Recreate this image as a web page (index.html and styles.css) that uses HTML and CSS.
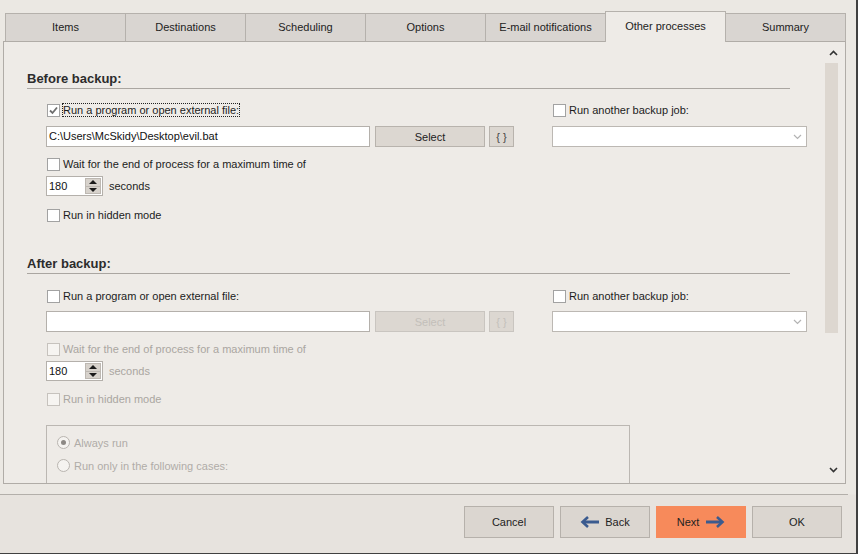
FILE: index.html
```html
<!DOCTYPE html>
<html>
<head>
<meta charset="utf-8">
<link rel="stylesheet" href="styles.css">
</head>
<body>
<div class="window">
  <div class="main">
    <div class="tabs">
      <div class="tab">Items</div>
      <div class="tab">Destinations</div>
      <div class="tab">Scheduling</div>
      <div class="tab">Options</div>
      <div class="tab">E-mail notifications</div>
      <div class="tab active">Other processes</div>
      <div class="tab">Summary</div>
    </div>
    <div class="panel">
      <div class="content">
        <div class="section before">
          <div class="heading">Before backup:</div>
          <div class="body">
            <div class="row r-first">
              <div class="left">
                <span class="chk"><svg width="11" height="11" viewBox="0 0 11 11"><polyline points="2,5.5 4.5,8 9,2.5" fill="none" stroke="#6e6e6e" stroke-width="1.8"/></svg></span>
                <span class="lbl focus">Run a program or open external file:</span>
              </div>
              <div class="right">
                <span class="chk"></span>
                <span class="lbl">Run another backup job:</span>
              </div>
            </div>
            <div class="row r-input">
              <div class="textbox">C:\Users\McSkidy\Desktop\evil.bat</div>
              <div class="btn select">Select</div>
              <div class="btn braces">{ }</div>
              <div class="combo"><svg width="9" height="6" viewBox="0 0 9 6"><polyline points="1,1 4.5,4.5 8,1" fill="none" stroke="#b3b3b3" stroke-width="1.2"/></svg></div>
            </div>
            <div class="row r-wait">
              <span class="chk"></span>
              <span class="lbl">Wait for the end of process for a maximum time of</span>
            </div>
            <div class="row r-spin">
              <div class="spinner">
                <span class="num">180</span>
                <span class="spin"><span class="up"></span><span class="down"></span></span>
              </div>
              <span class="unit">seconds</span>
            </div>
            <div class="row r-hidden">
              <span class="chk"></span>
              <span class="lbl">Run in hidden mode</span>
            </div>
          </div>
        </div>

        <div class="section after">
          <div class="heading">After backup:</div>
          <div class="body">
            <div class="row r-first">
              <div class="left">
                <span class="chk"></span>
                <span class="lbl">Run a program or open external file:</span>
              </div>
              <div class="right">
                <span class="chk"></span>
                <span class="lbl">Run another backup job:</span>
              </div>
            </div>
            <div class="row r-input">
              <div class="textbox"></div>
              <div class="btn select disabled">Select</div>
              <div class="btn braces disabled">{ }</div>
              <div class="combo"><svg width="9" height="6" viewBox="0 0 9 6"><polyline points="1,1 4.5,4.5 8,1" fill="none" stroke="#b3b3b3" stroke-width="1.2"/></svg></div>
            </div>
            <div class="row r-wait dis">
              <span class="chk"></span>
              <span class="lbl">Wait for the end of process for a maximum time of</span>
            </div>
            <div class="row r-spin dis">
              <div class="spinner">
                <span class="num">180</span>
                <span class="spin"><span class="up"></span><span class="down"></span></span>
              </div>
              <span class="unit">seconds</span>
            </div>
            <div class="row r-hidden dis">
              <span class="chk"></span>
              <span class="lbl">Run in hidden mode</span>
            </div>
            <div class="group">
              <div class="radio-row"><span class="radio on"></span><span class="lbl">Always run</span></div>
              <div class="radio-row second"><span class="radio"></span><span class="lbl">Run only in the following cases:</span></div>
            </div>
          </div>
        </div>
      </div>
      <div class="scrollbar">
        <div class="sb-up"><svg width="9" height="6" viewBox="0 0 9 6"><polyline points="1,5 4.5,1.5 8,5" fill="none" stroke="#333" stroke-width="1.6"/></svg></div>
        <div class="sb-thumb"></div>
        <div class="sb-space"></div>
        <div class="sb-down"><svg width="9" height="6" viewBox="0 0 9 6"><polyline points="1,1 4.5,4.5 8,1" fill="none" stroke="#333" stroke-width="1.6"/></svg></div>
      </div>
    </div>
  </div>
  <div class="sep"></div>
  <div class="footer">
    <div class="fbtn">Cancel</div>
    <div class="fbtn"><svg width="20" height="12" viewBox="0 0 20 12"><path d="M19 6 H4" stroke="#3b5b8f" stroke-width="3" fill="none"/><polyline points="8,1 2.5,6 8,11" fill="none" stroke="#3b5b8f" stroke-width="2.6"/></svg><span>Back</span></div>
    <div class="fbtn next"><span>Next</span><svg width="20" height="12" viewBox="0 0 20 12"><path d="M1 6 H16" stroke="#3b5b8f" stroke-width="3" fill="none"/><polyline points="12,1 17.5,6 12,11" fill="none" stroke="#3b5b8f" stroke-width="2.6"/></svg></div>
    <div class="fbtn">OK</div>
  </div>
</div>
</body>
</html>
```

FILE: styles.css
```css
* { box-sizing: border-box; }
html, body { margin: 0; padding: 0; }
body {
  width: 858px;
  height: 554px;
  overflow: hidden;
  font-family: "Liberation Sans", Arial, sans-serif;
  font-size: 11px;
  color: #1c1c1c;
  background: #e9e5e0;
}
.window {
  width: 858px;
  height: 554px;
  display: flex;
  flex-direction: column;
  border-right: 2px solid #404040;
  border-bottom: 1px solid #404040;
  background: #e9e5e0;
}
.main {
  height: 494px;
  padding: 11px 0 0 3px;
  background: #ebe8e3;
}
.tabs {
  display: flex;
  align-items: flex-end;
  height: 30px;
  padding-left: 2px;
}
.tab {
  width: 121px;
  height: 28px;
  margin-left: -1px;
  border: 1px solid #b5b1ac;
  border-bottom: none;
  background: #d9d5d1;
  display: flex;
  align-items: center;
  justify-content: center;
  color: #222;
  padding-bottom: 2px;
}
.tab:first-child { margin-left: 0; }
.tab.active {
  height: 31px;
  margin-bottom: -1px;
  background: #eeebe7;
  position: relative;
  z-index: 2;
  padding-bottom: 2px;
}
.panel {
  width: 843px;
  height: 443px;
  border: 1px solid #b0aca7;
  background: #eeebe7;
  display: flex;
  overflow: hidden;
}
.content {
  width: 817px;
  height: 100%;
  overflow: hidden;
  padding: 28px 31px 0 23px;
}
.heading {
  font-weight: bold;
  font-size: 13px;
  line-height: 16px;
  padding-top: 1px;
  padding-bottom: 1px;
  border-bottom: 1px solid #aaa6a1;
  color: #2c2c2c;
}
.after { margin-top: 33px; }
.body { padding-left: 19px; width: 800px; }
.row { display: flex; align-items: center; }
.r-first { height: 14px; margin-top: 14px; }
.r-input { height: 21px; margin-top: 9px; }
.r-wait { height: 14px; margin-top: 10px; }
.r-spin { height: 20px; margin-top: 5px; }
.r-hidden { height: 14px; margin-top: 12px; }
.after .r-first { margin-top: 15px; }
.after .r-input { margin-top: 8px; }
.after .r-hidden { margin-top: 11px; }

.left { width: 506px; display: flex; align-items: center; }
.right { display: flex; align-items: center; }
.chk {
  width: 13px;
  height: 13px;
  margin-left: 1px;
  border: 1px solid #a2a2a2;
  background: #fff;
  display: inline-flex;
  align-items: center;
  justify-content: center;
  flex: none;
}
.lbl { margin-left: 3px; line-height: 14px; white-space: nowrap; }
.lbl.focus {
  margin-left: 2px;
  padding: 0 1px;
  outline: 1px dotted #222;
  outline-offset: -1px;
}
.dis .chk { border-color: #c6c2bd; background: #f6f4f1; }
.dis .lbl, .dis .unit { color: #aaa6a1; }

.textbox {
  width: 324px;
  height: 21px;
  border: 1px solid #b4b0ab;
  background: #fff;
  padding-left: 2px;
  line-height: 19px;
  color: #111;
}
.btn {
  height: 21px;
  border: 1px solid #b8b3ad;
  background: #dcd7d1;
  display: flex;
  align-items: center;
  justify-content: center;
  color: #222;
}
.select { width: 110px; margin-left: 5px; }
.braces { width: 25px; margin-left: 4px; color: #444; }
.btn.disabled { color: #c3bfba; border-color: #c9c5c0; }
.combo {
  width: 255px;
  height: 21px;
  margin-left: 38px;
  border: 1px solid #bcb8b3;
  background: #fff;
  display: flex;
  align-items: center;
  justify-content: flex-end;
  padding-right: 4px;
}

.spinner {
  width: 57px;
  height: 20px;
  border: 1px solid #b4b0ab;
  background: #fff;
  display: flex;
  align-items: stretch;
  padding: 1px;
}
.num { flex: 1; padding-left: 1px; line-height: 16px; color: #111; }
.spin {
  width: 16px;
  background: #d7d2cc;
  border: 1px solid #bdb8b2;
  display: flex;
  flex-direction: column;
}
.spin .up, .spin .down {
  flex: 1;
  display: flex;
  align-items: center;
  justify-content: center;
}
.spin .up { border-bottom: 1px solid #bdb8b2; }
.spin .up::before {
  content: "";
  border-left: 4px solid transparent;
  border-right: 4px solid transparent;
  border-bottom: 4px solid #1a1a1a;
}
.spin .down::before {
  content: "";
  border-left: 4px solid transparent;
  border-right: 4px solid transparent;
  border-top: 4px solid #1a1a1a;
}
.unit { margin-left: 6px; }

.group {
  margin-top: 19px;
  width: 584px;
  height: 90px;
  border: 1px solid #bbb7b2;
  padding: 10px 0 0 10px;
}
.radio-row { display: flex; align-items: center; height: 13px; }
.radio-row.second { margin-top: 10px; }
.radio {
  width: 13px;
  height: 13px;
  border-radius: 50%;
  border: 1px solid #b9b5b0;
  background: #f5f3f0;
  display: flex;
  align-items: center;
  justify-content: center;
}
.radio.on::after {
  content: "";
  width: 5px;
  height: 5px;
  border-radius: 50%;
  background: #8d8985;
}
.radio-row .lbl { color: #b0aca7; margin-left: 4px; }

.scrollbar {
  width: 24px;
  height: 100%;
  display: flex;
  flex-direction: column;
}
.sb-up { height: 21px; display: flex; align-items: center; justify-content: center; padding-left: 1px; }
.sb-thumb { height: 270px; width: 13px; margin-left: 4px; background: #ddd7d0; }
.sb-space { flex: 1; }
.sb-down { height: 26px; display: flex; align-items: center; justify-content: center; padding-left: 1px; }

.sep { height: 1px; background: #b3afaa; margin-right: 8px; }
.footer {
  flex: 1;
  background: #e7e3de;
  display: flex;
  justify-content: flex-end;
  align-items: flex-start;
  gap: 6px;
  padding: 11px 14px 0 0;
}
.fbtn {
  width: 90px;
  height: 32px;
  border: 1px solid #b6b1ab;
  background: #dbd6d0;
  display: flex;
  align-items: center;
  justify-content: center;
  gap: 5px;
  color: #222;
}
.fbtn.next { background: #f78a5b; border-color: #f78a5b; gap: 6px; }
```
